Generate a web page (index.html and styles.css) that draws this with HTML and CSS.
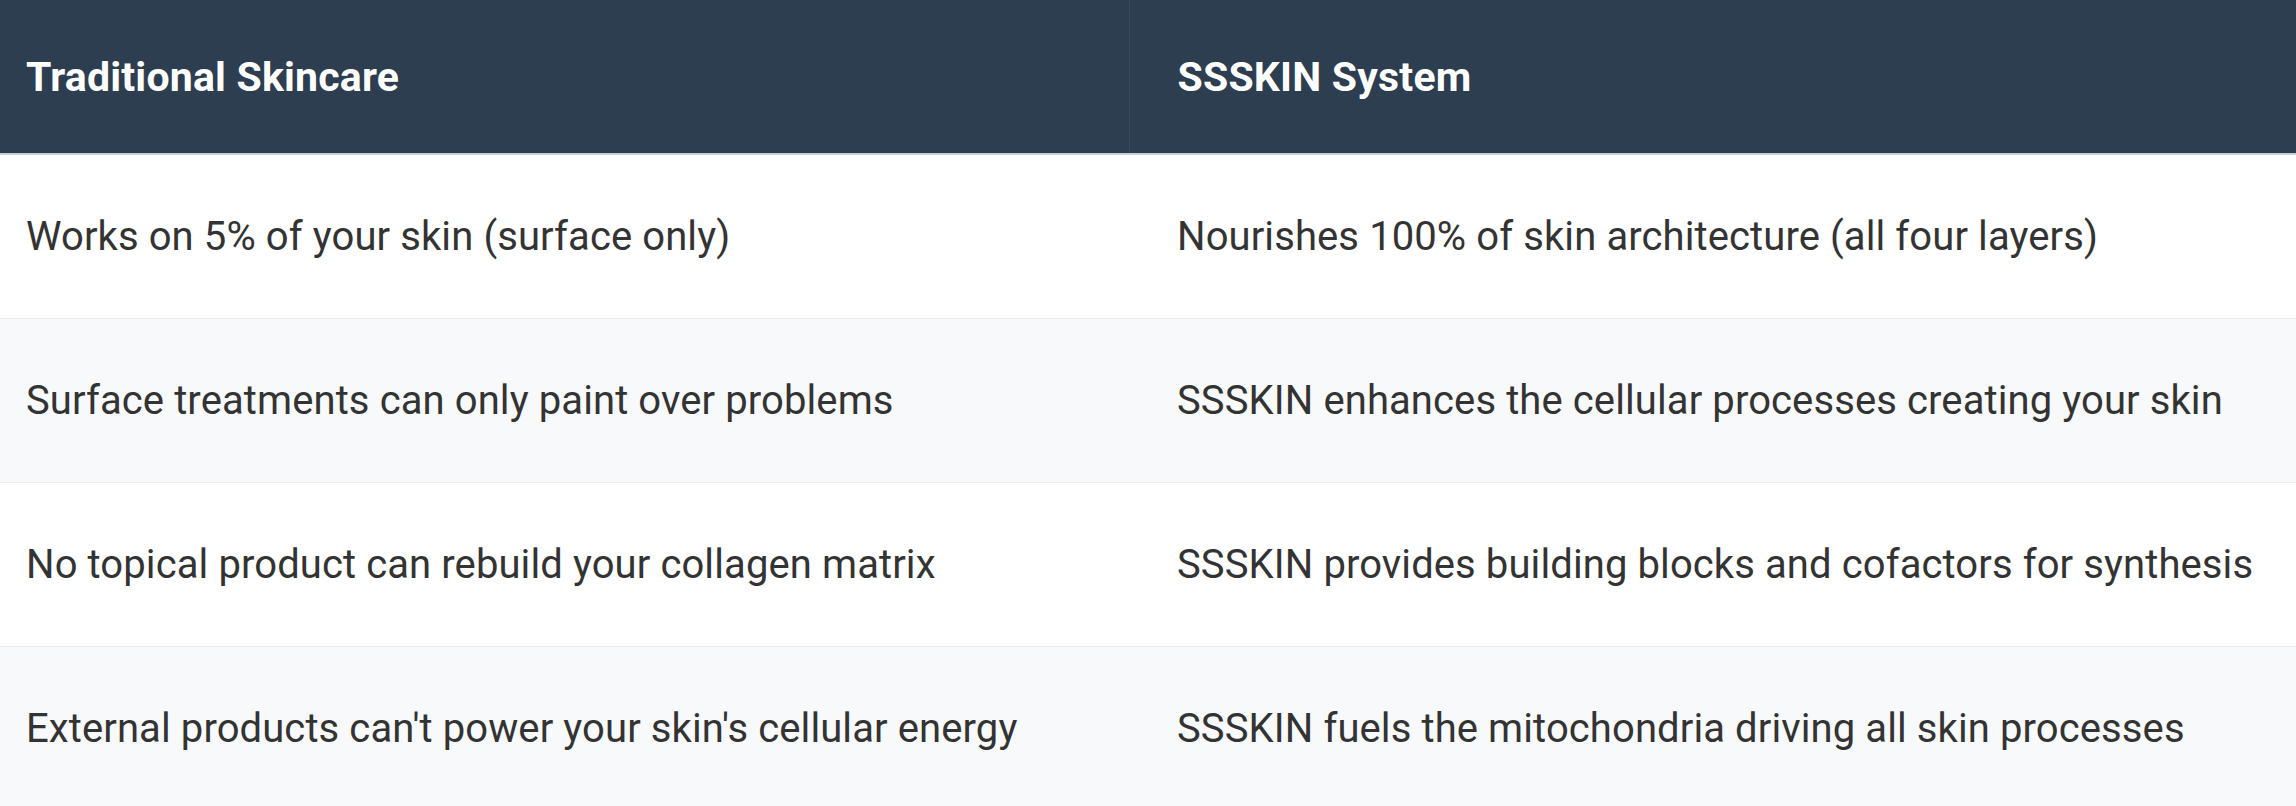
FILE: index.html
```html
<!DOCTYPE html>
<html lang="en">
<head>
    <meta charset="UTF-8">
    <meta name="viewport" content="width=device-width, initial-scale=1.0">
    <title>Traditional Skincare vs SSSKIN</title>
    <link rel="stylesheet" href="styles.css">
</head>
<body>
    <table class="compare">
        <colgroup>
            <col class="col-old">
            <col class="col-new">
        </colgroup>
        <thead>
            <tr>
                <th>Traditional Skincare</th>
                <th>SSSKIN System</th>
            </tr>
        </thead>
        <tbody>
            <tr>
                <td>Works on 5% of your skin (surface only)</td>
                <td>Nourishes 100% of skin architecture (all four layers)</td>
            </tr>
            <tr>
                <td>Surface treatments can only paint over problems</td>
                <td>SSSKIN enhances the cellular processes creating your skin</td>
            </tr>
            <tr>
                <td>No topical product can rebuild your collagen matrix</td>
                <td>SSSKIN provides building blocks and cofactors for synthesis</td>
            </tr>
            <tr>
                <td>External products can't power your skin's cellular energy</td>
                <td>SSSKIN fuels the mitochondria driving all skin processes</td>
            </tr>
        </tbody>
    </table>
</body>
</html>
```

FILE: styles.css
```css
body {
    margin: 0;
    font-family: Roboto, 'Liberation Sans', sans-serif;
    color: #333;
    background: #fff;
}

.compare {
    width: 100%;
    border-collapse: collapse;
    table-layout: fixed;
}

.col-old {
    width: 1129px;
}

.compare th,
.compare td {
    text-align: left;
    vertical-align: middle;
    font-size: 40px;
    padding: 0 26px;
}

.compare th + th,
.compare td + td {
    padding-left: 48px;
}

.compare th {
    background: #2c3e50;
    color: #fff;
    font-size: 41px;
    font-weight: 700;
    letter-spacing: 0.2px;
    height: 153px;
    border-bottom: 2px solid #c9ced6;
}

.compare th + th {
    border-left: 1px solid #364859;
}

.compare td {
    height: 163px;
    border-bottom: 1px solid #ececec;
    letter-spacing: 0.1px;
}

/* striped rows */
.compare tbody tr:nth-child(even) td {
    background: #f8f9fa;
}
```
